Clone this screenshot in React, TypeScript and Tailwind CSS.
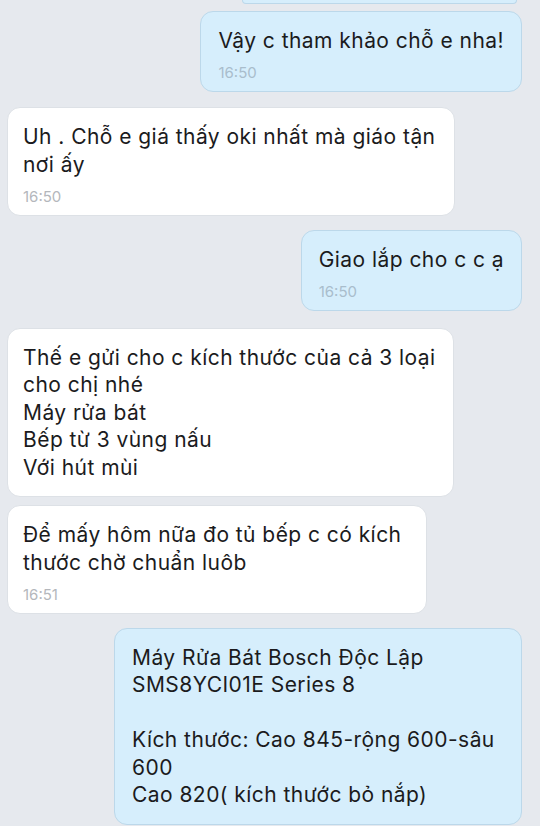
import React from "react";

type Msg = {
  mine: boolean;
  lines: string[];
  time?: string;
  gap: string;
  width?: string;
};

const messages: Msg[] = [
  { mine: true, lines: ["Vậy c tham khảo chỗ e nha!"], time: "16:50", gap: "mt-[7px]" },
  {
    mine: false,
    lines: ["Uh . Chỗ e giá thấy oki nhất mà giáo tận nơi ấy"],
    time: "16:50",
    gap: "mt-[15px]",
    width: "w-[448px]",
  },
  { mine: true, lines: ["Giao lắp cho c c ạ"], time: "16:50", gap: "mt-[14px]" },
  {
    mine: false,
    lines: ["Thế e gửi cho c kích thước của cả 3 loại cho chị nhé", "Máy rửa bát", "Bếp từ 3 vùng nấu", "Với hút mùi"],
    gap: "mt-[17px]",
    width: "w-[447px]",
  },
  {
    mine: false,
    lines: ["Để mấy hôm nữa đo tủ bếp c có kích thước chờ chuẩn luôb"],
    time: "16:51",
    gap: "mt-[8px]",
    width: "w-[420px]",
  },
  {
    mine: true,
    lines: ["Máy Rửa Bát Bosch Độc Lập SMS8YCI01E Series 8", "", "Kích thước: Cao 845-rộng 600-sâu 600", "Cao 820( kích thước bỏ nắp)"],
    gap: "mt-[14px]",
    width: "w-[408px]",
  },
];

function Bubble({ msg }: { msg: Msg }) {
  const base = msg.mine
    ? "rounded-[13px] border border-[#bcd8ea] bg-[#d6eefc] px-[17px] pt-[15px]"
    : "rounded-[13px] border border-[#dde1e6] bg-white px-[15px] pt-[15px]";
  return (
    <div className={`flex ${msg.mine ? "justify-end pr-[18px]" : "justify-start pl-[7px]"} ${msg.gap}`}>
      <div className={`${base} ${msg.width ?? "max-w-[448px]"} ${msg.time ? "pb-[9px]" : "pb-[15px]"}`}>
        {msg.lines.map((line, i) => (
          <p key={i} className="min-h-[27.5px] text-[21px] leading-[27.5px] tracking-[0.45px] text-[#1b1b1d]">
            {line}
          </p>
        ))}
        {msg.time && (
          <p className={`mt-[9.5px] text-[15px] leading-[18px] ${msg.mine ? "text-[#a9bdcc]" : "text-[#b4b7bc]"}`}>
            {msg.time}
          </p>
        )}
      </div>
    </div>
  );
}

export default function App() {
  return (
    <div
      className="h-[826px] w-[540px] overflow-hidden bg-[#e6e9ee]"
      style={{ fontFamily: "Inter, 'Noto Sans', sans-serif" }}
    >
      {/* tail of the previous bubble */}
      <div className="flex justify-end pr-[23px]">
        <div className="h-[4px] w-[275px] rounded-b-[10px] border border-t-0 border-[#bcd8ea] bg-[#d6eefc]" />
      </div>
      {messages.map((m, i) => (
        <Bubble key={i} msg={m} />
      ))}
    </div>
  );
}
